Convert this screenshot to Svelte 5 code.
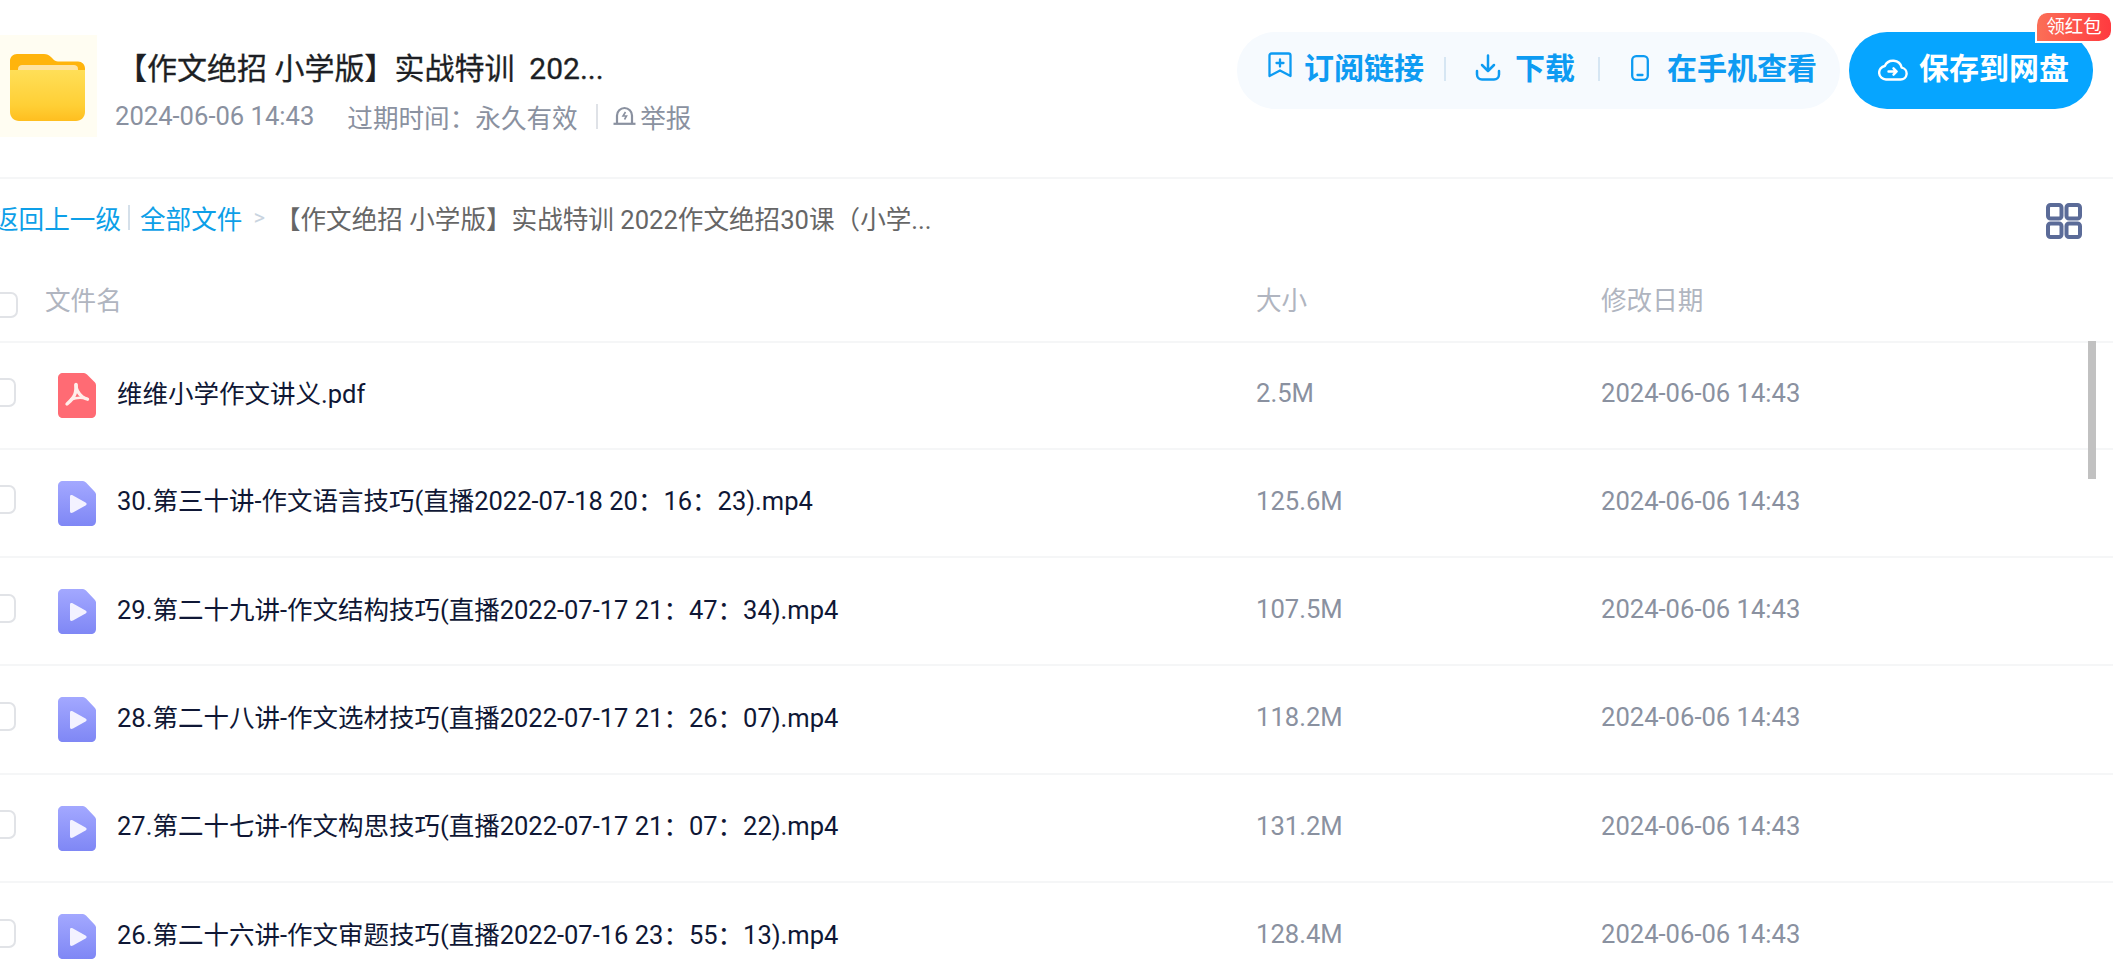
<script>
  const files = [
    { name: '维维小学作文讲义.pdf', size: '2.5M', type: 'pdf' },
    { name: '30.第三十讲-作文语言技巧(直播2022-07-18 20：16：23).mp4', size: '125.6M', type: 'video' },
    { name: '29.第二十九讲-作文结构技巧(直播2022-07-17 21：47：34).mp4', size: '107.5M', type: 'video' },
    { name: '28.第二十八讲-作文选材技巧(直播2022-07-17 21：26：07).mp4', size: '118.2M', type: 'video' },
    { name: '27.第二十七讲-作文构思技巧(直播2022-07-17 21：07：22).mp4', size: '131.2M', type: 'video' },
    { name: '26.第二十六讲-作文审题技巧(直播2022-07-16 23：55：13).mp4', size: '128.4M', type: 'video' }
  ];
</script>

<div class="page">
  <header class="top">
    <div class="tile">
      <svg class="folder" viewBox="0 0 75 67" width="75" height="67">
        <defs>
          <linearGradient id="fb" x1="0" y1="0" x2="0" y2="1"><stop offset="0" stop-color="#ffdf58"/><stop offset="0.7" stop-color="#ffcf35"/><stop offset="1" stop-color="#ffbe1f"/></linearGradient>
        </defs>
        <path d="M7 0h27c3 0 5 1 7 3l2 2c1 1.500 3 2.500 5 2.500h20c4 0 7 3 7 7V20H0V7c0-4 3-7 7-7z" fill="#ffb40c"/>
        <path d="M8 15c0-3 2-4 4-4h52c2 0 4 1 4 4v3H8z" fill="#ffe3a0"/>
        <path d="M0 16h75v42c0 5-4 9-9 9H9c-5 0-9-4-9-9z" fill="url(#fb)"/>
      </svg>
    </div>
    <div class="info">
      <h1>【作文绝招 小学版】实战特训&nbsp; 202...</h1>
      <div class="meta">
        <span>2024-06-06 14:43</span>
        <span class="expire">过期时间：永久有效</span>
        <i class="rule"></i>
        <svg class="report" viewBox="0 0 23 19" width="23" height="19" fill="none" stroke="#8a91a0" stroke-width="2.200">
          <path d="M4 17V9.500a7.500 7.500 0 0 1 15 0V17"/><path d="M.5 17.800h22"/><path d="M12.500 6l-2.500 4h3.500l-2 3.500" stroke-width="1.600"/>
        </svg>
        <span class="report-t">举报</span>
      </div>
    </div>
    <div class="actions">
      <div class="group">
        <div class="act a1">
          <svg viewBox="0 0 24 26" width="24" height="26" fill="none" stroke="#0d9bf2" stroke-width="2.300" stroke-linejoin="round" stroke-linecap="round">
            <path d="M3.500 1.500h17a2 2 0 0 1 2 2v20.500l-10.500-5.500L1.500 24V3.500a2 2 0 0 1 2-2z"/><path d="M12 7.500v7M8.500 11h7"/>
          </svg>
          <span>订阅链接</span>
        </div>
        <i class="sep s1"></i>
        <div class="act a2">
          <svg viewBox="0 0 26 27" width="26" height="27" fill="none" stroke="#0d9bf2" stroke-width="2.500" stroke-linecap="round" stroke-linejoin="round">
            <path d="M13 1.500v15M7 11l6 6 6-6"/><path d="M2 17v3.500a5 5 0 0 0 5 5h12a5 5 0 0 0 5-5V17"/>
          </svg>
          <span>下载</span>
        </div>
        <i class="sep s2"></i>
        <div class="act a3">
          <svg viewBox="0 0 18 26" width="18" height="26" fill="none" stroke="#0d9bf2" stroke-width="2.300" stroke-linecap="round">
            <rect x="1.200" y="1.200" width="15.600" height="23.600" rx="4"/><path d="M6.500 20h5"/>
          </svg>
          <span>在手机查看</span>
        </div>
      </div>
      <div class="save">
        <svg viewBox="0 0 30 24" width="30" height="24" fill="none" stroke="#fff" stroke-width="2.400" stroke-linecap="round" stroke-linejoin="round">
          <path d="M8 22.500h14.500a6 6 0 0 0 1.200-11.900A9 9 0 0 0 6.800 9 6.800 6.800 0 0 0 8 22.500z"/><path d="M10.500 14.500h8M15.500 11.300l3.200 3.200-3.200 3.200"/>
        </svg>
        <span>保存到网盘</span>
        <em class="badge">领红包</em>
      </div>
    </div>
  </header>

  <nav class="crumb">
    <span class="link back">返回上一级</span>
    <i class="bar"></i>
    <span class="link">全部文件</span>
    <span class="gt">&gt;</span>
    <span class="path">【作文绝招 小学版】实战特训 2022作文绝招30课（小学...</span>
    <svg class="grid-ic" viewBox="0 0 36 36" width="36" height="36" fill="none" stroke="#5b6b98" stroke-width="4">
      <rect x="2" y="2" width="13.500" height="13.500" rx="2.500"/><rect x="20.500" y="2" width="13.500" height="13.500" rx="2.500"/>
      <rect x="2" y="20.500" width="13.500" height="13.500" rx="2.500"/><rect x="20.500" y="20.500" width="13.500" height="13.500" rx="2.500"/>
    </svg>
  </nav>

  <div class="thead cols">
    <span class="box head-box"></span>
    <span>文件名</span>
    <span>大小</span>
    <span>修改日期</span>
  </div>

  <div class="list">
    {#each files as f}
      <div class="row cols">
        <span class="box"></span>
        <div class="name">
          {#if f.type === 'pdf'}
            <svg class="ficon" viewBox="0 0 38 45" width="38" height="45">
              <path d="M5 0h21c1 0 2 .500 3 1.500l8 8c.700.700 1 1.700 1 3V40c0 3-2 5-5 5H5c-3 0-5-2-5-5V5c0-3 2-5 5-5z" fill="#ff6b74"/>
              <g fill="none" stroke="#ffeeea" stroke-linecap="round" stroke-linejoin="round">
                <path d="M18 11.500c0 5 .500 8-2.500 12.500-2 3-4 5-6.500 7" stroke-width="3.400"/>
                <path d="M18 12c0 4 3 9 6 11.500 1.700 1.300 3.500 2.300 5.500 2.700" stroke-width="3.400"/>
                <path d="M13 26.500c4-1.500 8-2 12-1.500" stroke-width="2.600"/>
              </g>
            </svg>
          {:else}
            <svg class="ficon" viewBox="0 0 38 45" width="38" height="45">
              <defs><linearGradient id="vg" x1="0" y1="0" x2="0" y2="1"><stop offset="0" stop-color="#a3a8ff"/><stop offset="1" stop-color="#7f87f5"/></linearGradient></defs>
              <path d="M5 0h20c1 0 2 .500 3 1.500l8.500 9c1 1 1.500 2 1.500 3V40c0 3-2 5-5 5H5c-3 0-5-2-5-5V5c0-3 2-5 5-5z" fill="url(#vg)"/>
              <path d="M12 16c0-2 1-2.500 3-1.500l12.500 7c1.500 1 1.500 2 0 3L15 31.500c-2 1-3 .500-3-1.500z" fill="#f3f2ff"/>
            </svg>
          {/if}
          <span class="fname">{f.name}</span>
        </div>
        <span class="muted">{f.size}</span>
        <span class="muted">2024-06-06 14:43</span>
      </div>
    {/each}
    <div class="scrollbar"></div>
  </div>
</div>

<style>
  :global(body) { margin: 0; background: #fff; overflow: hidden; }
  .page {
    width: 2113px; height: 971px; overflow: hidden; background: #fff;
    font-family: Roboto, "Noto Sans CJK SC", sans-serif; font-size: 25.6px;
  }
  .top { height: 177px; display: flex; align-items: flex-start; border-bottom: 2px solid #f5f6f7; }
  .tile { width: 97px; height: 102px; margin-top: 35px; background: #fffdf2; display: flex; align-items: center; justify-content: center; flex: none; }
  .folder { margin-top: 3px; margin-right: 3px; }
  .info { margin-left: 18px; flex: none; }
  h1 { margin: 47px 0 0 2px; font-size: 30px; line-height: 44px; font-weight: 400; color: #1d1f24; white-space: pre; -webkit-text-stroke: 0.3px #1d1f24; }
  .meta { display: flex; align-items: center; margin-top: 4px; height: 42px; color: #8a91a0; }
  .expire { margin-left: 33px; }
  .rule { width: 2px; height: 25px; background: #dfe2e7; margin: 0 15px 0 18px; }
  .report { margin-bottom: 1px; }
  .report-t { margin-left: 4.500px; }
  .actions { margin-left: auto; margin-right: 20px; margin-top: 32px; display: flex; gap: 9px; }
  .group { width: 603px; height: 77px; border-radius: 38px; background: #f6fafe; display: flex; align-items: center; padding: 0 0 6px 31px; box-sizing: border-box; color: #0d9bf2; font-weight: 700; font-size: 30px; }
  .act { display: flex; align-items: center; }
  .act span { margin-bottom: 4px; }
  .a1 { gap: 12px; } .a1 svg { margin-top: -6px; }
  .a2 { gap: 14px; } .a3 { gap: 18px; }
  .sep { width: 2px; height: 24px; background: #d6e6f3; }
  .s1 { margin: 3px 29px 0 20px; }
  .s2 { margin: 3px 31px 0 23px; }
  .save { position: relative; width: 244px; height: 77px; border-radius: 38px; background: #06a5ff; color: #fff; font-weight: 700; font-size: 30px; display: flex; align-items: center; padding: 0 0 4px 29px; gap: 11px; box-sizing: border-box; }
  .save span { margin-bottom: 6px; }
  .badge { position: absolute; right: -18px; top: -19px; width: 74px; height: 28px; border: solid #fff; border-width: 0 0 2px 2px; border-radius: 12px 12px 12px 0; background: linear-gradient(90deg, #fb6f57, #ff3a3f); font-style: normal; font-weight: 400; font-size: 18.400px; line-height: 27px; text-align: center; }
  .crumb { height: 84px; box-sizing: border-box; display: flex; align-items: center; margin-left: -7px; padding: 0 31px 8px 0; color: #666; }
  .link { color: #0d9fe8; }
  .bar { width: 2px; height: 25px; background: #d5e0ea; margin: 0 10px 0 7px; }
  .gt { color: #c9d4e0; margin: 0 10px 0 11px; font-size: 22px; }
  .path { color: #666; }
  .grid-ic { margin: 8px 0 0 auto; }
  .cols { display: grid; grid-template-columns: 53px 1211px 345px 1fr; align-items: center; margin-left: -8px; padding-right: 25px; }
  .thead { height: 80px; padding-bottom: 7px; border-bottom: 2px solid #f5f6f7; color: #b0b5c0; box-sizing: border-box; }
  .box { width: 22px; height: 25px; border: 2px solid #e1e3e7; border-radius: 7px; background: #fff; display: block; }
  .head-box { width: 22px; height: 22px; margin-top: 13px; }
  .list { position: relative; }
  .row { height: 108.400px; border-bottom: 2px solid #f5f6f7; box-sizing: border-box; grid-template-columns: 66px 1198px 345px 1fr; }
  .row:first-child { height: 106.500px; }
  .row .box { width: 20px; margin-top: -6px; }
  .name { display: flex; align-items: center; gap: 21px; color: #0f1735; }
  .fname { margin-bottom: 8px; font-size: 25.500px; }
  .ficon { flex: none; margin-top: 1px; }
  .muted { color: #8a91a0; margin-bottom: 4px; }
  .scrollbar { position: absolute; left: 2088px; top: -2px; width: 8px; height: 138px; background: #c1c1c1; }
</style>
